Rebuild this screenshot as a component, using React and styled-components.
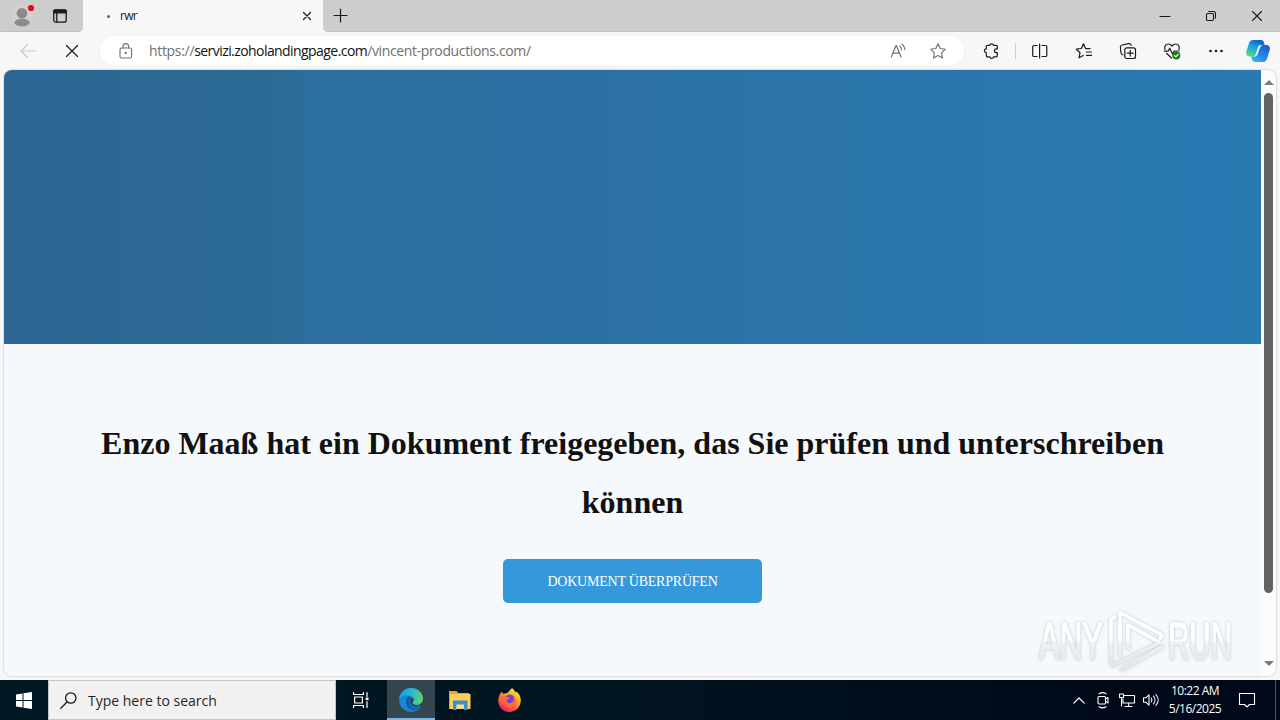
import styled, { createGlobalStyle } from 'styled-components';

const GlobalStyle = createGlobalStyle`
	* {
		box-sizing: border-box;
	}
	body {
		margin: 0;
		overflow: hidden;
		font-family: 'Open Sans', 'Noto Sans', sans-serif;
	}
	svg {
		display: block;
		flex: none;
		overflow: visible;
	}
`;

const Screen = styled.div`
	position: relative;
	display: flex;
	flex-direction: column;
	width: 1280px;
	height: 720px;
	overflow: hidden;
	background: #f7f7f7;
`;

const TitleBar = styled.div`
	display: flex;
	height: 32px;
	flex: none;
	background: #f7f7f7;
`;

const TabTools = styled.div`
	display: flex;
	width: 83px;
	background: #cdcdcd;
	border-bottom: 1px solid #c0c0c0;
	border-radius: 0 0 5px 0;
`;

const Slot = styled.div`
	display: flex;
	flex: none;
	align-items: center;
	justify-content: center;
	width: ${(props) => props.$w}px;
	height: 100%;
`;

const Tab = styled.div`
	display: flex;
	align-items: center;
	width: 240px;
	padding: 0 9px 0 24px;
	background: #f7f7f7;
`;

const LoadingDot = styled.span`
	width: 3px;
	height: 3px;
	border-radius: 50%;
	background: #2272ae;
	margin-right: 10px;
`;

const TabTitle = styled.span`
	flex: 1;
	font-size: 12px;
	line-height: 16px;
	letter-spacing: -0.7px;
	color: #1a1a1a;
`;

const TitleRest = styled.div`
	display: flex;
	flex: 1;
	background: #cdcdcd;
	border-bottom: 1px solid #c0c0c0;
	border-radius: 0 0 0 5px;
`;

const WindowButtons = styled.div`
	display: flex;
	margin-left: auto;
`;

const Toolbar = styled.div`
	display: flex;
	align-items: center;
	height: 38px;
	flex: none;
	padding: 0 2px 0 6px;
`;

const AddressBar = styled.div`
	display: flex;
	align-items: center;
	width: 864px;
	height: 30px;
	margin: 0 5px 0 6px;
	padding: 0 6px 0 6px;
	border-radius: 15px;
	background: #fff;
	box-shadow: 0 0 0 1px #f2f2f2;
`;

const Url = styled.div`
	flex: 1;
	padding-left: 3px;
	font-size: 14px;
	line-height: 20px;
	white-space: nowrap;
`;

const UrlPart = styled.span`
	color: ${(props) => props.$color || '#707070'};
	letter-spacing: ${(props) => props.$spacing}px;
`;

const Divider = styled.div`
	width: 1px;
	height: 16px;
	margin: 0 2px;
	background: #cfcfcf;
`;

const Viewport = styled.div`
	display: flex;
	flex: none;
	width: 1272px;
	height: 606px;
	margin-left: 4px;
	overflow: hidden;
	border-radius: 8px;
	background: #fcfcfc;
	box-shadow: 0 0 1px 1px #dcdcdc;
`;

const Page = styled.main`
	display: flex;
	flex-direction: column;
	align-items: center;
	width: 1257px;
	background: #f5f9fc;
`;

const Banner = styled.div`
	width: 100%;
	height: 274px;
	background: linear-gradient(to right, #2d6694 0%, #2b6994 14%, #2b6d98 23%, #2c6e9f 24%, #2b70a3 45%, #2b74a9 62%, #2a78af 85%, #2979b2 100%);
`;

const Heading = styled.h1`
	width: 1120px;
	margin: 70px 0 27px;
	font-family: 'Liberation Serif', 'Times New Roman', serif;
	font-size: 32px;
	line-height: 59px;
	font-weight: 700;
	text-align: center;
	color: #111;
`;

const ReviewButton = styled.button`
	width: 259px;
	height: 44px;
	padding: 2px 0 0;
	border: 0;
	border-radius: 5px;
	background: #3498db;
	color: #fff;
	font-family: 'Liberation Serif', 'Times New Roman', serif;
	font-size: 14px;
	letter-spacing: -0.22px;
`;

const ScrollTrack = styled.div`
	display: flex;
	flex-direction: column;
	align-items: center;
	width: 15px;
	height: 606px;
	padding: 10px 0 10px;
`;

const ScrollThumb = styled.div`
	width: 9px;
	height: 500px;
	margin: 8px 0 auto;
	border-radius: 5px;
	background: #636363;
`;

const Watermark = styled.div`
	position: absolute;
	left: 1030px;
	top: 604px;
`;

const Taskbar = styled.div`
	display: flex;
	align-items: center;
	height: 40px;
	margin-top: auto;
	background: linear-gradient(to right, #001822 0%, #001420 50%, #000a18 85%, #00081a 100%);
`;

const SearchBox = styled.div`
	display: flex;
	align-items: center;
	width: 288px;
	height: 40px;
	padding-left: 11px;
	border: 1px solid #c4c4c4;
	background: #f1f1f1;
	color: #262626;
	font-size: 14px;
`;

const SearchText = styled.span`
	margin-left: 11px;
`;

const AppButton = styled(Slot)`
	margin-right: 1px;
	background: ${(props) => (props.$active ? '#33454d' : 'transparent')};
	box-shadow: ${(props) => (props.$active ? 'inset 0 -2px #76b9ed' : 'none')};
`;

const Tray = styled.div`
	display: flex;
	align-items: center;
	height: 100%;
	margin-left: auto;
`;

const Clock = styled.div`
	width: 64px;
	font-size: 12px;
	line-height: 18px;
	letter-spacing: -0.5px;
	text-align: center;
	color: #fff;
	white-space: nowrap;
`;

const ShowDesktop = styled.div`
	width: 5px;
	height: 100%;
	border-left: 1px solid #4a5260;
`;

const Icon = ({ w = 20, h = w, color = '#1a1a1a', sw = 1.1, children }) => (
	<svg width={w} height={h} viewBox={`0 0 ${w} ${h}`} fill="none" stroke={color} strokeWidth={sw} strokeLinecap="round" strokeLinejoin="round">
		{children}
	</svg>
);

const Profile = () => (
	<svg width="24" height="24" viewBox="0 0 24 24">
		<circle cx="12" cy="12.500" r="11" fill="#d3d1cf" />
		<circle cx="12" cy="9.200" r="5.300" fill="#8b8b8b" />
		<path d="M4 19c1-3.200 4-4.300 8-4.300s7 1.100 8 4.300c-2 2.500-5 3.500-8 3.500s-6-1-8-3.500z" fill="#8f8b88" />
		<circle cx="21" cy="4" r="3.100" fill="#e00b1c" />
	</svg>
);

const TabActions = () => (
	<Icon w={14} h={14} sw={1.3}>
		<rect x="0.800" y="0.800" width="12.400" height="12.400" rx="2" />
		<path d="M1 1.200h12v2.600H1z" fill="#1a1a1a" />
		<path d="M3.800 4v9" />
	</Icon>
);

const Close = ({ size = 10, sw = 1.1 }) => (
	<Icon w={size} sw={sw}>
		<path d={`M0.500 0.500L${size - 0.5} ${size - 0.5}M${size - 0.5} 0.500L0.500 ${size - 0.5}`} />
	</Icon>
);

const Lock = () => (
	<Icon w={14} h={16} color="#707070">
		<rect x="1" y="5" width="11.600" height="10" rx="1.500" />
		<path d="M4 5V3.400a2.800 2.800 0 0 1 5.600 0V5" />
		<circle cx="6.800" cy="10" r="0.600" fill="#707070" />
	</Icon>
);

const ReadAloud = () => (
	<Icon w={16} h={16} color="#707070" sw={1.2}>
		<path d="M1.300 14L5.900 2.700h.6L11 14M2.900 10.200h6.500M9.800 3.200c1.200.8 1.700 2 1.700 3.500M12 1.200c2 1.500 2.900 3.200 3 5.500" />
	</Icon>
);

const Star = () => (
	<Icon w={16} h={16} color="#707070">
		<path d="M8 .8l2.200 4.700 5.100.7-3.700 3.600.9 5.100L8 12.500l-4.500 2.400.9-5.100L.7 6.200l5.100-.7z" />
	</Icon>
);

const Puzzle = () => (
	<Icon w={16} h={16} sw={1.2}>
		<path d="M4.600 2.300h2.200a1.900 1.900 0 0 1 3.700 0h2.500a1.300 1.300 0 0 1 1.300 1.300v2.300h-1a1.900 1.900 0 0 0 0 3.800h1v2.900a1.300 1.300 0 0 1-1.300 1.300h-2.500a1.900 1.900 0 0 1-3.700 0H4.600a1.300 1.300 0 0 1-1.300-1.300V9.700a1.900 1.900 0 0 1 0-3.800V3.600a1.300 1.300 0 0 1 1.300-1.300z" />
	</Icon>
);

const SplitScreen = () => (
	<Icon w={16} h={16} sw={1.2}>
		<path d="M5.200 2.500H2A1.300 1.300 0 0 0 .7 3.800v8.400A1.300 1.300 0 0 0 2 13.500h3.200M10 2.500h3.500a1.300 1.300 0 0 1 1.300 1.300v8.400a1.300 1.300 0 0 1-1.300 1.300H10M7.600 1v14" />
	</Icon>
);

const Favorites = () => (
	<Icon w={16} h={16} sw={1.2}>
		<path d="M14 5.700H9.700L7.500.8 5.400 5.500.4 6.200 4 9.700l-.9 5.100 4.200-2.300M10.500 9h5M10.500 12.400h5" />
	</Icon>
);

const Collections = () => (
	<Icon w={16} h={16} sw={1.2}>
		<rect x="4.800" y="4.800" width="10.700" height="10.700" rx="2" />
		<path d="M10.200 7.300v5.800M7.300 10.200h5.800M2.900 12C1.500 11.500 1 10.700.9 9.500L.4 4.200C.3 3 1 2.200 2.200 2L8.500.7c1.300-.2 2.200.2 2.700 1.600" />
	</Icon>
);

const Essentials = () => (
	<Icon w={16} h={16} sw={1.2}>
		<path d="M1 6.500C0 3 2 1 4.300 1 6 1 7 1.800 8 3c1-1.200 2-2 3.700-2C14 1 16 3 15 6.500M.3 8.200h3.800l1.600-3 2.800 5.800 1.800-3h4.800M2.500 10.300L7.500 15" />
		<circle cx="12.300" cy="12.500" r="4" fill="#13801c" stroke="none" />
		<path d="M10.500 12.600l1.300 1.200 2.400-2.500" stroke="#fff" />
	</Icon>
);

const Dots = () => (
	<svg width="14" height="4" viewBox="0 0 14 4" fill="#1a1a1a">
		<circle cx="1.500" cy="2" r="1.300" />
		<circle cx="7" cy="2" r="1.300" />
		<circle cx="12.500" cy="2" r="1.300" />
	</svg>
);

const Copilot = () => (
	<svg width="24" height="22" viewBox="0 0 24 22">
		<defs>
			<linearGradient id="cpLeft" x1="0.600" y1="0" x2="0.200" y2="1">
				<stop offset="0" stopColor="#0a63c4" />
				<stop offset="0.450" stopColor="#18a8e8" />
				<stop offset="1" stopColor="#63d977" />
			</linearGradient>
			<linearGradient id="cpRight" x1="0.900" y1="0" x2="0.200" y2="1">
				<stop offset="0" stopColor="#1b59d0" />
				<stop offset="0.600" stopColor="#2785ee" />
				<stop offset="1" stopColor="#29bdf3" />
			</linearGradient>
		</defs>
		<path d="M7.500 0h7.300c2 0 2.800 1 3.300 3l.6 2h-3c-1.600 0-2.400.8-2.900 2.400l-2 6.200c-.7 2-1.500 2.900-3.500 2.900H4C1 16.500-.4 14.500.3 11.500L3 3.200C3.700 1 5 0 7.500 0z" fill="url(#cpLeft)" />
		<path d="M16.500 22H9.300c-2 0-2.900-1-3.500-3l-.7-2.500h3c1.700 0 2.500-.8 3-2.400l2-6.200c.7-2 1.500-2.900 3.500-2.900H20c3 0 4.500 2 3.700 5L21 18.800c-.7 2.200-2 3.200-4.500 3.200z" fill="url(#cpRight)" />
		<path d="M13.500 5.200h3c-1.600.6-2.300 1.700-2.800 3.200l-1.800 5.200c-.6 1.800-1.500 2.800-3.500 3h-.8c1.200-.5 1.800-1.500 2.300-3l1.900-5.900c.3-1 .8-1.900 1.700-2.500z" fill="#edfaff" />
	</svg>
);

const Triangle = ({ down }) => (
	<svg width="10" height="5" viewBox="0 0 10 5" fill="#7b7b7b">
		<path d={down ? 'M0 0h10L5 5z' : 'M0 5h10L5 0z'} />
	</svg>
);

const WindowsLogo = () => (
	<svg width="17" height="17" viewBox="0 0 17 17" fill="#fff">
		<path d="M0 2.500l6.500-1V8H0zM7.500 1.300L16 0v8H7.500zM0 9h6.500v6.500L0 14.500zM7.500 9H16v8l-8.500-1.300z" />
	</svg>
);

const TaskView = () => (
	<Icon w={17} h={16} color="#fff" sw={1.2}>
		<path d="M.6.500v2h9.800v-2M.6 15.500v-2h9.800v2M1.600 5h7.800v6H1.600zM14 .5v4M14 9.500v6" />
		<path d="M12.700 5.500h2.800v2.600h-2.800z" fill="#fff" stroke="none" />
	</Icon>
);

const Edge = () => (
	<svg width="24" height="24" viewBox="0 0 24 24">
		<defs>
			<linearGradient id="edgeTop" x1="0" y1="0.300" x2="1" y2="0.500">
				<stop offset="0" stopColor="#1b9de2" />
				<stop offset="0.500" stopColor="#2bb9d2" />
				<stop offset="1" stopColor="#58d36c" />
			</linearGradient>
			<linearGradient id="edgeLow" x1="0" y1="0" x2="1" y2="1">
				<stop offset="0" stopColor="#0c4f96" />
				<stop offset="1" stopColor="#1a6bbd" />
			</linearGradient>
		</defs>
		<path d="M12 0a12 12 0 1 0 10.300 18.200L14 14z" fill="#1a84d6" />
		<path d="M.1 11C1 4 6 0 12 0c7 0 12 5 12 10.500 0 4-3 6.300-6.300 6.300-2.600 0-4.200-1-4.200-2 0-.8 1.200-1.300 1.200-3 0-2.500-2.500-4.600-6-4.600C4.500 7.200 1.200 9 .1 11z" fill="url(#edgeTop)" />
		<path d="M9.800 8.300C7 10.500 6.300 15 8.500 18.800c2.400 4 7.500 5 12.300 1.500.6-.4 1.200-1.300 1.500-2-1.700 1-3.700 1.300-6 1.200-4-.2-6.500-2.700-6.500-6.500 0-1.700.8-2.700 2.200-3z" fill="url(#edgeLow)" />
		<path d="M11.300 10.700c-1.600 3.300.2 6.600 3.800 7.800 2.600.8 5.300.3 7.200-.6 .6-.4.200-1.300-.5-1-1.400.5-2.900.6-4.600.4-2.400-.3-3.700-1.500-3.700-2.500 0-.8 1.200-1.300 1.200-3-.8-1.900-2.300-2.100-3.400-1.100z" fill="#2c4a5c" />
	</svg>
);

const Explorer = () => (
	<svg width="22" height="19" viewBox="0 0 22 19">
		<path d="M0 0h7.500l2 2H20v16H0z" fill="#e9a520" />
		<path d="M1 3h20.500v15H1z" fill="#fccf5c" />
		<path d="M4 9.500h14.500V19h-3.500v-4H7.500v4H4z" fill="#3e8fc8" />
		<path d="M7.500 13.500H15V18H7.500z" fill="#f7dc8e" />
	</svg>
);

const Firefox = () => (
	<svg width="23" height="24" viewBox="0 0 23 24">
		<defs>
			<linearGradient id="fox" x1="0.850" y1="0" x2="0.200" y2="1">
				<stop offset="0" stopColor="#fff04a" />
				<stop offset="0.350" stopColor="#ffae24" />
				<stop offset="0.650" stopColor="#ff5c36" />
				<stop offset="1" stopColor="#f0126f" />
			</linearGradient>
		</defs>
		<path d="M14 0c2 1.600 3 3.500 4 5 .4-.6.200-1.400 0-2 3.500 3 4.800 6 4.800 9.500C22.800 19 17.600 24 11.500 24 5 24 .2 18.800.2 12.700.2 9 1.500 6 4 3.500c.1 1 .4 1.700 1 2.300 1-.7 2.600-.8 4-.5C10.600 3.700 12.300 2 14 0z" fill="url(#fox)" />
		<circle cx="12" cy="11.800" r="5.200" fill="#7542d5" />
		<path d="M1.700 10c2-2.200 4.800-2 6.600-.8h3.600c-.2 1.300-2.700 2-3.400 3.500.2 2 3 3.300 5.500 1.900 2-1.100 2.300-3.700.4-6 4.500 1.300 5.200 7.700.6 10.300C9.500 22 3.500 18 1.700 10z" fill="#ff6a3a" />
	</svg>
);

const Mark = () => (
	<svg width="210" height="76" viewBox="0 0 210 76">
		<defs>
			<linearGradient id="markFill" x1="0" y1="0" x2="0" y2="76" gradientUnits="userSpaceOnUse">
				<stop offset="0.480" stopColor="#ffffff" />
				<stop offset="0.500" stopColor="#f0f2f3" />
				<stop offset="0.850" stopColor="#e2e4e5" />
			</linearGradient>
			<filter id="markShadow" x="-10%" y="-10%" width="120%" height="120%">
				<feDropShadow dx="0" dy="0" stdDeviation="1.700" floodColor="#8d9499" floodOpacity="0.550" />
			</filter>
		</defs>
		<g filter="url(#markShadow)" fill="url(#markFill)" fontFamily="'Liberation Sans', Arial, sans-serif" fontSize="51" stroke="url(#markFill)">
			<text x="9" y="55" textLength="64" lengthAdjust="spacingAndGlyphs" strokeWidth="1.300">ANY</text>
			<text x="138" y="55" textLength="64" lengthAdjust="spacingAndGlyphs" strokeWidth="1.300">RUN</text>
			<g fill="none" strokeWidth="4" strokeLinejoin="round" strokeLinecap="round">
				<path d="M90 52V8.500L132 31l-2 3M98 45V21l32 17.500L84 61c-2 .8-3-.5-3-3V15l4-2" strokeWidth="3.600" />
				<path d="M92 65.500L132 43" />
			</g>
		</g>
	</svg>
);

const App = () => (
	<>
		<GlobalStyle />
		<Screen>
			<TitleBar>
				<TabTools>
					<Slot $w={44}><Profile /></Slot>
					<Slot $w={32}><TabActions /></Slot>
				</TabTools>
				<Tab>
					<LoadingDot />
					<TabTitle>rwr</TabTitle>
					<Slot $w={14}><Close size={8} sw={1.2} /></Slot>
				</Tab>
				<TitleRest>
					<Slot $w={35}>
						<Icon w={13} sw={1.2}><path d="M6.500 0v13M0 6.500h13" /></Icon>
					</Slot>
					<WindowButtons>
						<Slot $w={46}><Icon w={10}><path d="M0 5.500h10" /></Icon></Slot>
						<Slot $w={46}>
							<Icon w={10}>
								<rect x="0.500" y="2.500" width="7" height="7" rx="1.200" />
								<path d="M2.700.5h4.800a2 2 0 0 1 2 2v4.800" />
							</Icon>
						</Slot>
						<Slot $w={46}><Close /></Slot>
					</WindowButtons>
				</TitleRest>
			</TitleBar>

			<Toolbar>
				<Slot $w={44}>
					<Icon w={16} color="#cacaca"><path d="M15.500 8H1M7.500 1.500L1 8l6.500 6.500" /></Icon>
				</Slot>
				<Slot $w={44}><Close size={12} sw={1.2} /></Slot>
				<AddressBar>
					<Slot $w={40}><Lock /></Slot>
					<Url>
						<UrlPart $spacing={-0.32}>https://</UrlPart>
						<UrlPart $color="#111" $spacing={-0.57}>servizi.zoholandingpage.com</UrlPart>
						<UrlPart $spacing={-0.36}>/vincent-productions.com/</UrlPart>
					</Url>
					<Slot $w={40}><ReadAloud /></Slot>
					<Slot $w={40}><Star /></Slot>
				</AddressBar>
				<Slot $w={44}><Puzzle /></Slot>
				<Divider />
				<Slot $w={44}><SplitScreen /></Slot>
				<Slot $w={44}><Favorites /></Slot>
				<Slot $w={44}><Collections /></Slot>
				<Slot $w={44}><Essentials /></Slot>
				<Slot $w={44}><Dots /></Slot>
				<Slot $w={40}><Copilot /></Slot>
			</Toolbar>

			<Viewport>
				<Page>
					<Banner />
					<Heading>Enzo Maaß hat ein Dokument freigegeben, das Sie prüfen und unterschreiben können</Heading>
					<ReviewButton>DOKUMENT ÜBERPRÜFEN</ReviewButton>
				</Page>
				<ScrollTrack>
					<Triangle />
					<ScrollThumb />
					<Triangle down />
				</ScrollTrack>
			</Viewport>

			<Taskbar>
				<Slot $w={48}><WindowsLogo /></Slot>
				<SearchBox>
					<Icon w={17} color="#1a1a1a" sw={1.3}>
						<circle cx="10.800" cy="6" r="5.200" />
						<path d="M7 10L.8 16.200" />
					</Icon>
					<SearchText>Type here to search</SearchText>
				</SearchBox>
				<Slot $w={51}><TaskView /></Slot>
				<AppButton $w={48} $active><Edge /></AppButton>
				<AppButton $w={48}><Explorer /></AppButton>
				<AppButton $w={48}><Firefox /></AppButton>
				<Tray>
					<Slot $w={24}>
						<Icon w={12} h={7} color="#fff" sw={1.2}><path d="M.8 6.200L6 1l5.200 5.200" /></Icon>
					</Slot>
					<Slot $w={24}>
						<Icon w={12} h={16} color="#fff">
							<rect x="1" y="4.500" width="7.500" height="7.500" rx="1" />
							<path d="M8.500 7l2.500-1.500v5.500L8.500 9.500M2 1.800c2-1.400 5-1.400 7 0M2 14.700c2 1.400 5 1.400 7 0" />
						</Icon>
					</Slot>
					<Slot $w={24}>
						<Icon w={16} h={14} color="#fff">
							<path d="M5 2.500h10.500v7.500H4V6M6 13.500h7M9.700 10v3M.5 1h4v3.500h-4zM2.500 4.500V13" />
						</Icon>
					</Slot>
					<Slot $w={24}>
						<Icon w={16} h={14} color="#fff">
							<path d="M.5 4.800h2.300L6 1.800v10.400l-3.200-3H.5zM8.200 5c.9 1.200.9 2.800 0 4M10.500 3.200c2 2.200 2 5.400 0 7.600M12.900 1.500c3 3.300 3 7.700 0 11" />
						</Icon>
					</Slot>
					<Clock>
						<div>10:22 AM</div>
						<div>5/16/2025</div>
					</Clock>
					<Slot $w={40}>
						<Icon w={16} h={16} color="#fff">
							<path d="M.5 1.500h15v11h-5L8 15l-2.500-2.500h-5z" />
						</Icon>
					</Slot>
					<Slot $w={8} />
					<ShowDesktop />
				</Tray>
			</Taskbar>

			<Watermark><Mark /></Watermark>
		</Screen>
	</>
);

export default App;
